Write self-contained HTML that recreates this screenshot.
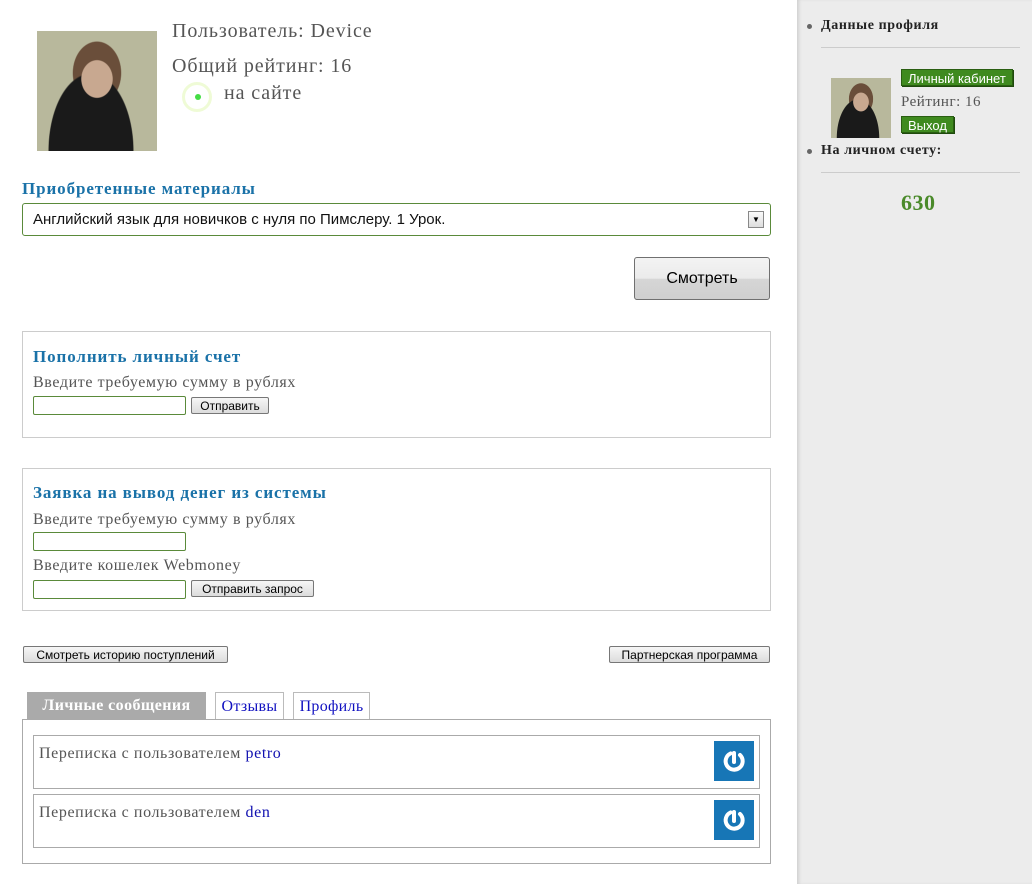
<!DOCTYPE html>
<html><head><meta charset="utf-8"><style>
body{margin:0;width:1032px;height:884px;background:#fff;position:relative;overflow:hidden;font-family:"Liberation Serif","DejaVu Serif",serif;color:#555}
.a{position:absolute;white-space:nowrap}
.t{font-size:16px;letter-spacing:0.6px}
.sans{font-family:"Liberation Sans",Arial,sans-serif}
.btn{position:absolute;font-family:"Liberation Sans",Arial,sans-serif;font-size:12px;color:#000;border:1px solid #777;border-radius:2px;background:linear-gradient(#f6f6f6,#dcdcdc);height:17px;line-height:17px;text-align:center;box-sizing:border-box;white-space:nowrap}
.inp{position:absolute;border:1px solid #5a8a3a;height:19px;width:153px;box-sizing:border-box;border-radius:2px;background:#fff}
.box{position:absolute;border:1px solid #ccc;box-sizing:border-box}
.h{position:absolute;color:#1a72a8;font-weight:bold;font-size:17px;letter-spacing:0.9px;white-space:nowrap}
.photo{position:absolute;background:radial-gradient(ellipse at 50% 40%,#c8a890 0 18%,transparent 19%),radial-gradient(ellipse at 45% 100%,#1a1a1a 0 45%,transparent 46%),radial-gradient(ellipse at 50% 35%,#6a4e3a 0 28%,transparent 29%),#b8b89c}
.pw{position:absolute;width:40px;height:40px;background:#1776b6}
.pw svg{position:absolute;left:8px;top:8px}
.gb{position:absolute;font-family:"Liberation Sans",Arial,sans-serif;font-size:13px;color:#fff;background:#3f8a1f;border:1px solid #2a5e12;box-shadow:1px 1px 0 #1e4a0c;height:17px;line-height:17px;padding:0 6px;box-sizing:border-box;white-space:nowrap}
.sb{font-size:14px;font-weight:bold;color:#222;letter-spacing:0.6px}
</style></head><body>
<div class="a" style="left:797px;top:0;width:235px;height:884px;background:#ececec;box-shadow:inset 3px 0 3px -1px #d0d0d0"></div>

<div class="photo" style="left:37px;top:31px;width:120px;height:120px"></div>
<div class="a" style="left:172px;top:20px;font-size:20px;letter-spacing:0.9px">Пользователь: Device</div>
<div class="a" style="left:172px;top:55px;font-size:20px;letter-spacing:0.9px">Общий рейтинг: 16</div>
<div class="a" style="left:182px;top:82px;width:30px;height:30px;border-radius:50%;border:3px solid #effbd6;box-sizing:border-box"></div>
<div class="a" style="left:195px;top:94px;width:6px;height:6px;border-radius:50%;background:#44dd44"></div>
<div class="a" style="left:224px;top:82px;font-size:20px;letter-spacing:0.9px">на сайте</div>

<div class="h" style="left:22px;top:179px">Приобретенные материалы</div>
<div class="a sans" style="left:22px;top:203px;width:749px;height:33px;border:1px solid #5a8a3a;border-radius:3px;box-sizing:border-box;font-size:15px;color:#111;line-height:31px;padding-left:10px">Английский язык для новичков с нуля по Пимслеру. 1 Урок.</div>
<div class="a" style="left:748px;top:211px;width:16px;height:17px;border:1px solid #888;box-sizing:border-box;background:linear-gradient(#fafafa,#ddd);font-size:8px;text-align:center;line-height:15px;color:#000">▼</div>
<div class="btn" style="left:634px;top:257px;width:136px;height:43px;line-height:41px;font-size:16px;border-radius:3px;border-color:#707070;background:linear-gradient(#f3f3f3 0,#ebebeb 50%,#d6d6d6 51%,#cfcfcf)">Смотреть</div>

<div class="box" style="left:22px;top:331px;width:749px;height:107px"></div>
<div class="h" style="left:33px;top:347px">Пополнить личный счет</div>
<div class="a t" style="left:33px;top:374px">Введите требуемую сумму в рублях</div>
<div class="inp" style="left:33px;top:396px"></div>
<div class="btn" style="left:191px;top:397px;width:78px">Отправить</div>

<div class="box" style="left:22px;top:468px;width:749px;height:143px"></div>
<div class="h" style="left:33px;top:483px">Заявка на вывод денег из системы</div>
<div class="a t" style="left:33px;top:511px">Введите требуемую сумму в рублях</div>
<div class="inp" style="left:33px;top:532px"></div>
<div class="a t" style="left:33px;top:557px">Введите кошелек Webmoney</div>
<div class="inp" style="left:33px;top:580px"></div>
<div class="btn" style="left:191px;top:580px;width:123px">Отправить запрос</div>

<div class="btn" style="left:23px;top:646px;width:205px">Смотреть историю поступлений</div>
<div class="btn" style="left:609px;top:646px;width:161px">Партнерская программа</div>

<div class="a" style="left:27px;top:692px;width:179px;height:28px;background:#aaa;color:#fff;font-weight:bold;font-size:16px;letter-spacing:0.4px;line-height:28px;text-align:center">Личные сообщения</div>
<div class="a t" style="left:215px;top:692px;width:69px;height:28px;border:1px solid #bbb;border-bottom:none;box-sizing:border-box;color:#1010c0;line-height:28px;text-align:center;letter-spacing:0.3px">Отзывы</div>
<div class="a t" style="left:293px;top:692px;width:77px;height:28px;border:1px solid #bbb;border-bottom:none;box-sizing:border-box;color:#1010c0;line-height:28px;text-align:center;letter-spacing:0.3px">Профиль</div>
<div class="box" style="left:22px;top:719px;width:749px;height:145px;border-color:#aaa"></div>
<div class="box" style="left:33px;top:735px;width:727px;height:54px;border-color:#aaa"></div>
<div class="a t" style="left:39px;top:745px">Переписка с пользователем <span style="color:#1010b0">petro</span></div>
<div class="box" style="left:33px;top:794px;width:727px;height:54px;border-color:#aaa"></div>
<div class="a t" style="left:39px;top:804px">Переписка с пользователем <span style="color:#1010b0">den</span></div>
<div class="pw" style="left:714px;top:741px"><svg width="24" height="24" viewBox="0 0 24 24"><path d="M8.5 4.5A8.5 8.5 0 1 0 18 6" fill="none" stroke="#fff" stroke-width="4" stroke-linecap="round"/><path d="M12 4v9" stroke="#fff" stroke-width="4" stroke-linecap="round"/></svg></div>
<div class="pw" style="left:714px;top:800px"><svg width="24" height="24" viewBox="0 0 24 24"><path d="M8.5 4.5A8.5 8.5 0 1 0 18 6" fill="none" stroke="#fff" stroke-width="4" stroke-linecap="round"/><path d="M12 4v9" stroke="#fff" stroke-width="4" stroke-linecap="round"/></svg></div>

<div class="a" style="left:807px;top:24px;width:5px;height:5px;border-radius:50%;background:#666"></div>
<div class="a sb" style="left:821px;top:18px">Данные профиля</div>
<div class="a" style="left:821px;top:47px;width:199px;height:1px;background:#ccc"></div>
<div class="photo" style="left:831px;top:78px;width:60px;height:60px"></div>
<div class="gb" style="left:901px;top:69px">Личный кабинет</div>
<div class="a" style="left:901px;top:94px;font-size:15px;letter-spacing:0.5px">Рейтинг: 16</div>
<div class="gb" style="left:901px;top:116px">Выход</div>
<div class="a" style="left:807px;top:149px;width:5px;height:5px;border-radius:50%;background:#666"></div>
<div class="a sb" style="left:821px;top:143px">На личном счету:</div>
<div class="a" style="left:821px;top:172px;width:199px;height:1px;background:#ccc"></div>
<div class="a" style="left:901px;top:190px;font-size:22px;font-weight:bold;color:#4a8a2a;letter-spacing:0.5px">630</div>
</body></html>
